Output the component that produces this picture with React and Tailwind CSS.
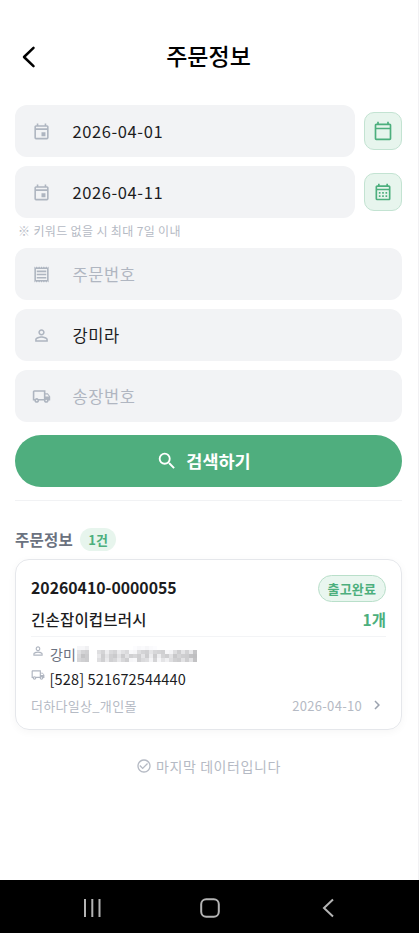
import React from 'react';
import {
  MdOutlineEvent,
  MdOutlineCalendarToday,
  MdOutlineCalendarMonth,
  MdOutlineReceipt,
  MdPersonOutline,
  MdOutlineLocalShipping,
  MdSearch,
  MdChevronRight,
  MdCheckCircleOutline,
} from 'react-icons/md';

// masked part of the receiver line, one number per block (grey level)
const maskRows = [
  [246, 246, 240, 255, 255, 255, 255, 255, 255, 255, 255, 255, 255, 255, 252, 248, 250, 246, 250, 252, 255, 255, 255, 255, 255, 255, 255, 255, 255, 255],
  [225, 212, 208, 255, 255, 222, 212, 238, 218, 212, 235, 225, 218, 248, 245, 222, 212, 208, 228, 215, 212, 208, 248, 244, 222, 205, 228, 210, 232, 196],
  [218, 196, 204, 255, 255, 232, 206, 228, 208, 202, 225, 204, 226, 208, 214, 206, 228, 205, 236, 204, 238, 212, 206, 226, 200, 212, 206, 204, 194, 190],
  [214, 208, 204, 255, 255, 222, 208, 234, 208, 214, 232, 216, 206, 246, 248, 206, 218, 222, 244, 212, 246, 228, 240, 222, 208, 204, 226, 206, 226, 194],
];

function Field({ icon: Icon, value, placeholder }) {
  return (
    <div className="flex h-[52px] flex-1 items-center rounded-[12px] bg-[#f2f3f5] pl-[17px]">
      <Icon className="h-[19px] w-[19px] text-[#aeb5c0]" />
      <span className={`ml-[21.5px] text-[16.5px] tracking-[0.6px] ${value ? 'text-[#1c1c1e]' : 'text-[#b0b6c1]'}`}>
        {value || placeholder}
      </span>
    </div>
  );
}

function DateButton({ children }) {
  return (
    <button className="flex h-[38px] w-[38px] items-center justify-center rounded-[10px] border border-[#c3e3d2] bg-[#e7f5ed] text-[#4caf7d]">
      {children}
    </button>
  );
}

function App() {
  return (
    <div className="flex h-[933px] w-[419px] flex-col overflow-hidden bg-white font-['Noto_Sans_CJK_KR','Noto_Sans',sans-serif] leading-none">
      <div className="flex-1 border-r border-[#f1f1f3] pr-[16px] pl-[15px]">
        {/* Header */}
        <header className="grid h-[105px] grid-cols-[60px_1fr_60px] items-center pt-[9px]">
          <svg className="ml-[7px] h-[22px] w-[14px]" viewBox="0 0 14 22" fill="none" stroke="#000" strokeWidth="2.5" strokeLinecap="round" strokeLinejoin="round">
            <path d="M11.5 1.8 L2 11 L11.5 20.2" />
          </svg>
          <h1 className="pb-[4px] text-center text-[23px] font-medium text-black">주문정보</h1>
        </header>

        {/* Search form */}
        <div className="flex flex-col gap-[9px]">
          <div className="flex items-center gap-[9px]">
            <Field icon={MdOutlineEvent} value="2026-04-01" />
            <DateButton><MdOutlineCalendarToday className="h-[20px] w-[20px]" /></DateButton>
          </div>
          <div className="flex items-center gap-[9px]">
            <Field icon={MdOutlineEvent} value="2026-04-11" />
            <DateButton><MdOutlineCalendarMonth className="h-[20px] w-[20px]" /></DateButton>
          </div>
        </div>
        <p className="flex h-[30px] items-center pb-[4px] pl-[3px] text-[12px] tracking-[0.35px] text-[#b5bac4]">※ 키워드 없을 시 최대 7일 이내</p>
        <div className="flex flex-col gap-[9px]">
          <div className="flex"><Field icon={MdOutlineReceipt} placeholder="주문번호" /></div>
          <div className="flex"><Field icon={MdPersonOutline} value="강미라" /></div>
          <div className="flex"><Field icon={MdOutlineLocalShipping} placeholder="송장번호" /></div>
        </div>
        <button className="mt-[13px] flex h-[52px] w-full items-center justify-center gap-[8px] rounded-full bg-[#4fae7e] pr-[10px] text-white">
          <MdSearch className="h-[22px] w-[22px]" />
          <span className="text-[17.5px] font-bold">검색하기</span>
        </button>
        <div className="mt-[13px] h-px bg-[#f1f2f4]" />

        {/* Result list */}
        <div className="mt-[27px] flex items-center gap-[7px]">
          <h2 className="text-[15.5px] font-bold tracking-[0.2px] text-[#6b7280]">주문정보</h2>
          <span className="flex h-[23px] items-center rounded-full bg-[#e7f5ed] px-[8.5px] text-[13px] font-bold text-[#4caf7d]">1건</span>
        </div>
        <div className="mt-[8px] h-[171px] rounded-[14px] border border-[#e5e7eb] px-[15px] pt-[15px] shadow-[0_2px_8px_rgba(0,0,0,0.04)]">
          <div className="flex h-[27px] items-center justify-between">
            <span className="pb-px text-[15.8px] font-bold text-[#1c1c1e]">20260410-0000055</span>
            <span className="flex h-[27px] items-center rounded-full border border-[#b9dfca] bg-[#e9f6ef] px-[9px] text-[13px] font-bold tracking-[0.15px] text-[#4caf7d]">출고완료</span>
          </div>
          <div className="mt-[6px] flex h-[24px] items-center justify-between text-[15.5px]">
            <span className="font-medium tracking-[0.2px] text-[#1c1c1e]">긴손잡이컵브러시</span>
            <span className="font-bold text-[#4caf7d]">1개</span>
          </div>
          <div className="mt-[4px] h-px bg-[#f3f4f6]" />
          <div className="mt-[7px] flex h-[24px] items-start">
            <MdPersonOutline className="h-[14px] w-[14px] text-[#b0b6c1]" />
            <span className="flex h-[20px] items-center pl-[5px] text-[14px] text-[#6b7280]">강미</span>
            <div className="mt-[2px] ml-px flex flex-col">
              {maskRows.map((row, i) => (
                <div key={i} className="flex">
                  {row.map((g, j) => (
                    <i key={j} className="h-[4px] w-[4px]" style={{ backgroundColor: `rgb(${g},${g},${Math.min(g + 2, 255)})` }} />
                  ))}
                </div>
              ))}
            </div>
          </div>
          <div className="flex h-[26px] items-start">
            <MdOutlineLocalShipping className="h-[14px] w-[14px] text-[#b0b6c1]" />
            <span className="flex h-[23px] items-center pl-[4.5px] text-[14.5px] tracking-[0.15px] text-[#1c1c1e]">[528] 521672544440</span>
          </div>
          <div className="flex h-[22px] items-center text-[13px] tracking-[0.3px] text-[#b5bac4]">
            <span>더하다일상_개인몰</span>
            <span className="ml-auto">2026-04-10</span>
            <MdChevronRight className="ml-[6px] h-[18px] w-[18px] text-[#9ca3af]" />
          </div>
        </div>
        <div className="mt-[28px] flex items-center justify-center gap-[4px] text-[#b5bac4]">
          <MdCheckCircleOutline className="h-[16px] w-[16px]" />
          <span className="text-[14px] tracking-[0.6px]">마지막 데이터입니다</span>
        </div>
      </div>

      {/* System navigation */}
      <nav className="flex h-[53px] shrink-0 items-center bg-black pt-[2px]">
        <svg className="ml-[83px] h-[20px] w-[18px]" viewBox="0 0 18 20" stroke="#b4b4b4" strokeWidth="2">
          <path d="M2 1V19M9.3 1V19M16.5 1V19" />
        </svg>
        <svg className="ml-[99px] h-[20px] w-[20px]" viewBox="0 0 20 20" fill="none" stroke="#b4b4b4" strokeWidth="2">
          <rect x="1.2" y="1.2" width="17.6" height="17.6" rx="5" />
        </svg>
        <svg className="ml-[102px] h-[20px] w-[12px]" viewBox="0 0 12 20" fill="none" stroke="#b4b4b4" strokeWidth="2">
          <path d="M11 1.5L2 10L11 18.5" />
        </svg>
      </nav>
    </div>
  );
}

export default App;
